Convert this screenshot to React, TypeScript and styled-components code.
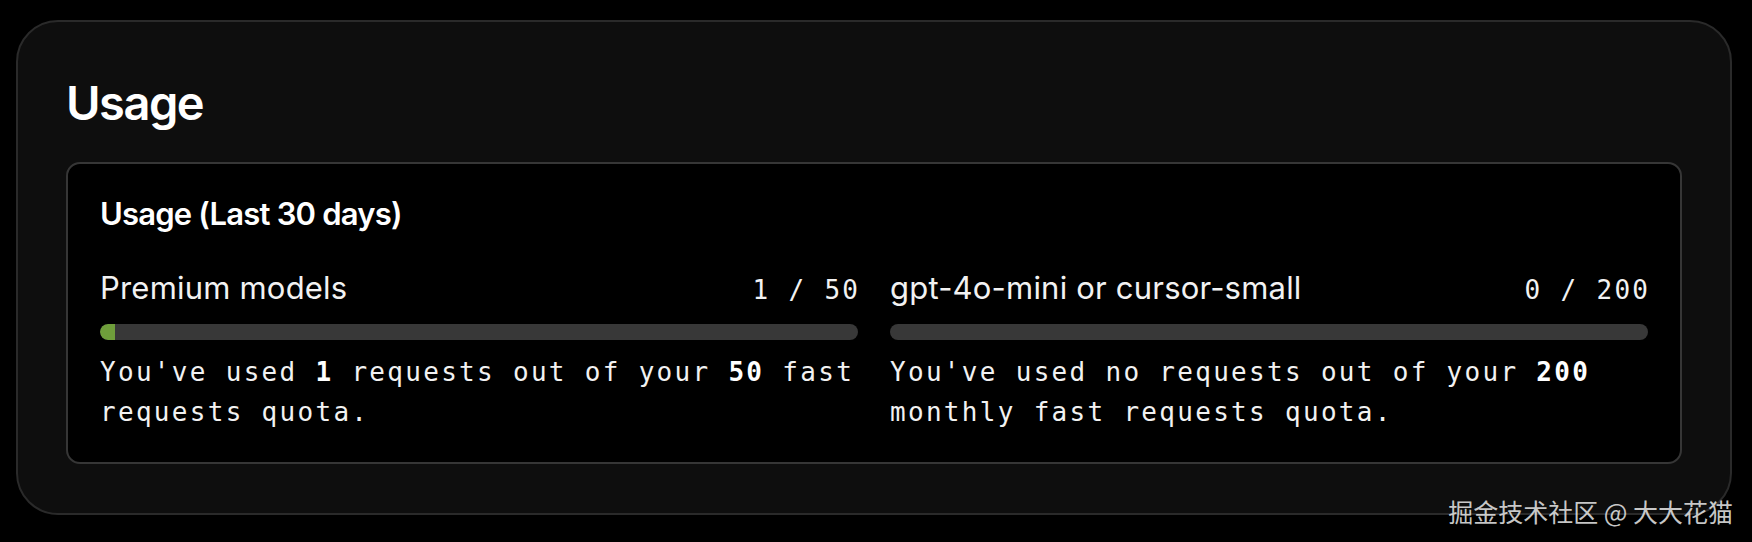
import React from "react";
import styled, { createGlobalStyle } from "styled-components";

const Global = createGlobalStyle`
  html, body { margin: 0; padding: 0; background: #000; }
  body { font-family: Inter, "Noto Sans", sans-serif; color: #fff; }
  * { box-sizing: border-box; }
`;

const Page = styled.div`
  position: relative;
  width: 1752px;
  height: 542px;
  padding: 20px 20px 0 16px;
  background: #000;
`;

const Panel = styled.section`
  width: 1716px;
  height: 495px;
  background: #0e0e0e;
  border: 2px solid #2a2a2a;
  border-radius: 42px;
  padding: 53px 48px 48px 48px;
`;

const Title = styled.h1`
  margin: 0 0 31px 0;
  font-family: Inter, sans-serif;
  font-weight: 600;
  font-size: 47px;
  line-height: 56px;
  letter-spacing: -1.5px;
  color: #fff;
`;

const Card = styled.div`
  height: 302px;
  background: #000;
  border: 2px solid #363636;
  border-radius: 14px;
  padding: 30px 32px 30px 32px;
`;

const CardTitle = styled.h2`
  margin: 0 0 34px 0;
  font-family: Inter, sans-serif;
  font-weight: 600;
  font-size: 31px;
  line-height: 40px;
  letter-spacing: -0.8px;
  color: #fff;
`;

const Columns = styled.div`
  display: grid;
  grid-template-columns: 1fr 1fr;
  column-gap: 32px;
`;

const Column = styled.div`
  display: flex;
  flex-direction: column;
  min-width: 0;
`;

const Header = styled.div`
  display: flex;
  justify-content: space-between;
  align-items: baseline;
  height: 40px;
`;

const Label = styled.span`
  font-family: Inter, sans-serif;
  font-weight: 400;
  font-size: 31px;
  line-height: 40px;
  letter-spacing: 0.2px;
  color: #f2f2f2;
`;

const Count = styled.span`
  font-family: "DejaVu Sans Mono", "Liberation Mono", monospace;
  font-size: 26px;
  line-height: 40px;
  letter-spacing: 2.3px;
  margin-right: -2.3px;
  color: #f2f2f2;
`;

const Track = styled.div`
  margin-top: 16px;
  height: 16px;
  border-radius: 8px;
  background: #383838;
  overflow: hidden;
`;

const Fill = styled.div`
  height: 100%;
  background: #6f9e3b;
  border-radius: 8px 0 0 8px;
`;

const Note = styled.p`
  margin: 12px 0 0 0;
  font-family: "DejaVu Sans Mono", "Liberation Mono", monospace;
  font-size: 26px;
  line-height: 40px;
  letter-spacing: 2.3px;
  color: #f2f2f2;

  b {
    font-weight: 700;
    color: #fff;
  }
`;

const Watermark = styled.div`
  position: absolute;
  right: 19px;
  bottom: 16px;
  font-family: "Noto Sans CJK SC", "Noto Sans", sans-serif;
  font-size: 25px;
  line-height: 30px;
  color: rgba(235, 235, 235, 0.85);
  white-space: nowrap;
`;

type Meter = {
  label: string;
  used: number;
  total: number;
  note: React.ReactNode;
};

const meters: Meter[] = [
  {
    label: "Premium models",
    used: 1,
    total: 50,
    note: (
      <>
        You've used <b>1</b> requests out of your <b>50</b> fast requests quota.
      </>
    ),
  },
  {
    label: "gpt-4o-mini or cursor-small",
    used: 0,
    total: 200,
    note: (
      <>
        You've used no requests out of your <b>200</b> monthly fast requests quota.
      </>
    ),
  },
];

export default function App() {
  return (
    <>
      <Global />
      <Page>
        <Panel>
          <Title>Usage</Title>
          <Card>
            <CardTitle>Usage (Last 30 days)</CardTitle>
            <Columns>
              {meters.map((m) => (
                <Column key={m.label}>
                  <Header>
                    <Label>{m.label}</Label>
                    <Count>
                      {m.used} / {m.total}
                    </Count>
                  </Header>
                  <Track>
                    <Fill style={{ width: `${(m.used / m.total) * 100}%` }} />
                  </Track>
                  <Note>{m.note}</Note>
                </Column>
              ))}
            </Columns>
          </Card>
        </Panel>
        <Watermark>掘金技术社区 @ 大大花猫</Watermark>
      </Page>
    </>
  );
}
